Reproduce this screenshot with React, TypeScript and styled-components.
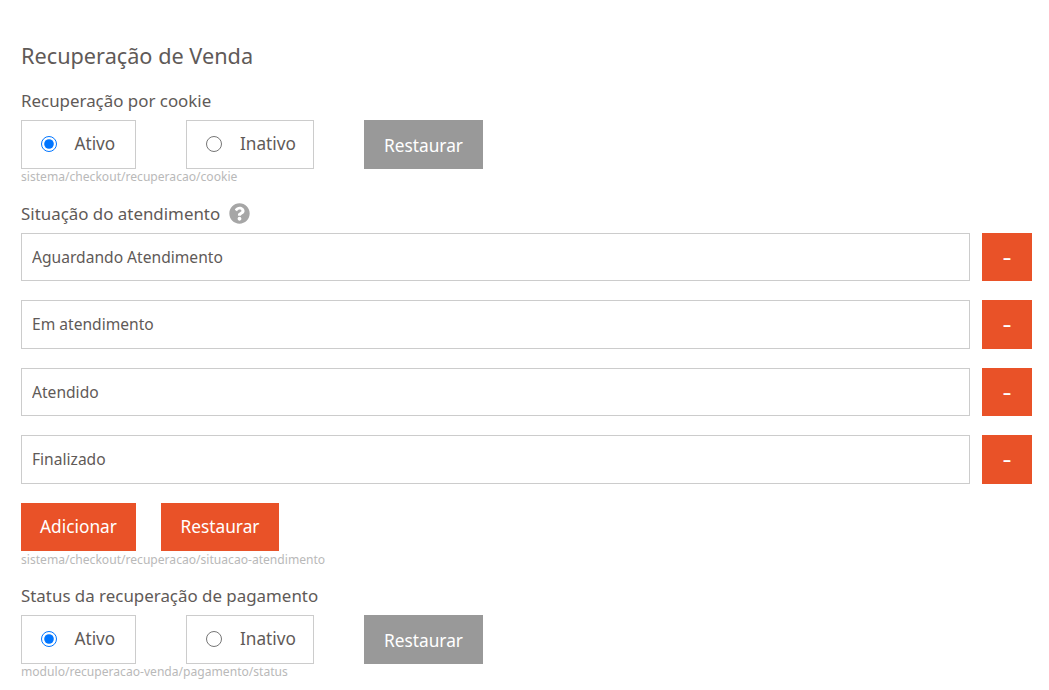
import React from 'react';
import styled, { createGlobalStyle } from 'styled-components';
import { FaQuestionCircle } from 'react-icons/fa';

const GlobalStyle = createGlobalStyle`
  html, body {
    margin: 0;
    padding: 0;
    background: #fff;
  }
  * {
    box-sizing: border-box;
  }
`;

const Page = styled.div`
  padding: 44px 17px 0 21px;
  font-family: 'Noto Sans', sans-serif;
  color: #5f5a58;
  height: 690px;
  overflow: hidden;
`;

const Title = styled.h2`
  margin: 0 0 20px;
  font-size: 21.7px;
  line-height: 24px;
  font-weight: 400;
`;

const Field = styled.div`
  margin-bottom: 15.6px;
`;

const Label = styled.div`
  display: flex;
  align-items: center;
  gap: 9px;
  padding-top: 1px;
  font-size: 16.9px;
  line-height: 24px;
  margin-bottom: 7px;
  color: #5f5a58;
`;

const HelpIcon = styled(FaQuestionCircle)`
  width: 21px;
  height: 21px;
  color: #a6a6a6;
`;

const Row = styled.div`
  display: flex;
  align-items: flex-start;
`;

const ActionRow = styled(Row)`
  height: 49px;
`;

const RadioBox = styled.label<{ $wide?: boolean }>`
  display: flex;
  align-items: center;
  gap: 18px;
  width: ${props => (props.$wide ? '128px' : '115px')};
  height: 49px;
  padding-left: ${props => (props.$wide ? '19px' : '18.5px')};
  padding-bottom: 2px;
  margin-right: 50px;
  border: 1px solid #ccc;
  font-size: 17.2px;
`;

const Radio = styled.input`
  width: 16px;
  height: 16px;
  margin: 1px 0 0;
`;

const Button = styled.button<{ $gray?: boolean }>`
  height: 48px;
  padding: 0;
  width: ${props => (props.$gray ? '119px' : 'auto')};
  border: none;
  border-radius: 0;
  background: ${props => (props.$gray ? '#999' : '#e95228')};
  color: #fff;
  font-family: inherit;
  font-size: 17.3px;
`;

const GrayButton = styled(Button)`
  height: 49px;
  padding-top: 1px;
`;

const ActionButton = styled(Button)<{ $width: number }>`
  width: ${props => props.$width}px;
  margin-right: 25px;
`;

const Path = styled.div`
  font-size: 12.1px;
  line-height: 16px;
  color: #b9b9b9;
`;

const Lines = styled.div`
  display: flex;
  flex-direction: column;
  gap: 19px;
  margin-bottom: 19px;
`;

const Line = styled.div`
  display: flex;
  gap: 12px;
  height: 48.5px;
`;

const TextInput = styled.input`
  flex: 1;
  min-width: 0;
  padding: 0 10px;
  border: 1px solid #ccc;
  border-radius: 0;
  font-family: inherit;
  font-size: 15.6px;
  color: #5f5a58;
  outline: none;
`;

const RemoveButton = styled(Button)`
  width: 50px;
  height: auto;
  font-size: 16px;
  font-weight: 700;
  line-height: 1;
`;

const RadioGroup = ({ name }: { name: string }) => (
  <Row>
    <RadioBox>
      <Radio type="radio" name={name} defaultChecked />
      Ativo
    </RadioBox>
    <RadioBox $wide>
      <Radio type="radio" name={name} />
      Inativo
    </RadioBox>
    <GrayButton $gray>Restaurar</GrayButton>
  </Row>
);

const situacoes = ['Aguardando Atendimento', 'Em atendimento', 'Atendido', 'Finalizado'];

export default function App() {
  return (
    <Page>
      <GlobalStyle />
      <Title>Recuperação de Venda</Title>

      <Field>
        <Label>Recuperação por cookie</Label>
        <RadioGroup name="cookie" />
        <Path>sistema/checkout/recuperacao/cookie</Path>
      </Field>

      <Field>
        <Label>
          Situação do atendimento
          <HelpIcon />
        </Label>
        <Lines>
          {situacoes.map(item => (
            <Line key={item}>
              <TextInput readOnly defaultValue={item} />
              <RemoveButton>–</RemoveButton>
            </Line>
          ))}
        </Lines>
        <ActionRow>
          <ActionButton $width={115}>Adicionar</ActionButton>
          <ActionButton $width={118}>Restaurar</ActionButton>
        </ActionRow>
        <Path>sistema/checkout/recuperacao/situacao-atendimento</Path>
      </Field>

      <Field>
        <Label>Status da recuperação de pagamento</Label>
        <RadioGroup name="pagamento" />
        <Path>modulo/recuperacao-venda/pagamento/status</Path>
      </Field>
    </Page>
  );
}
